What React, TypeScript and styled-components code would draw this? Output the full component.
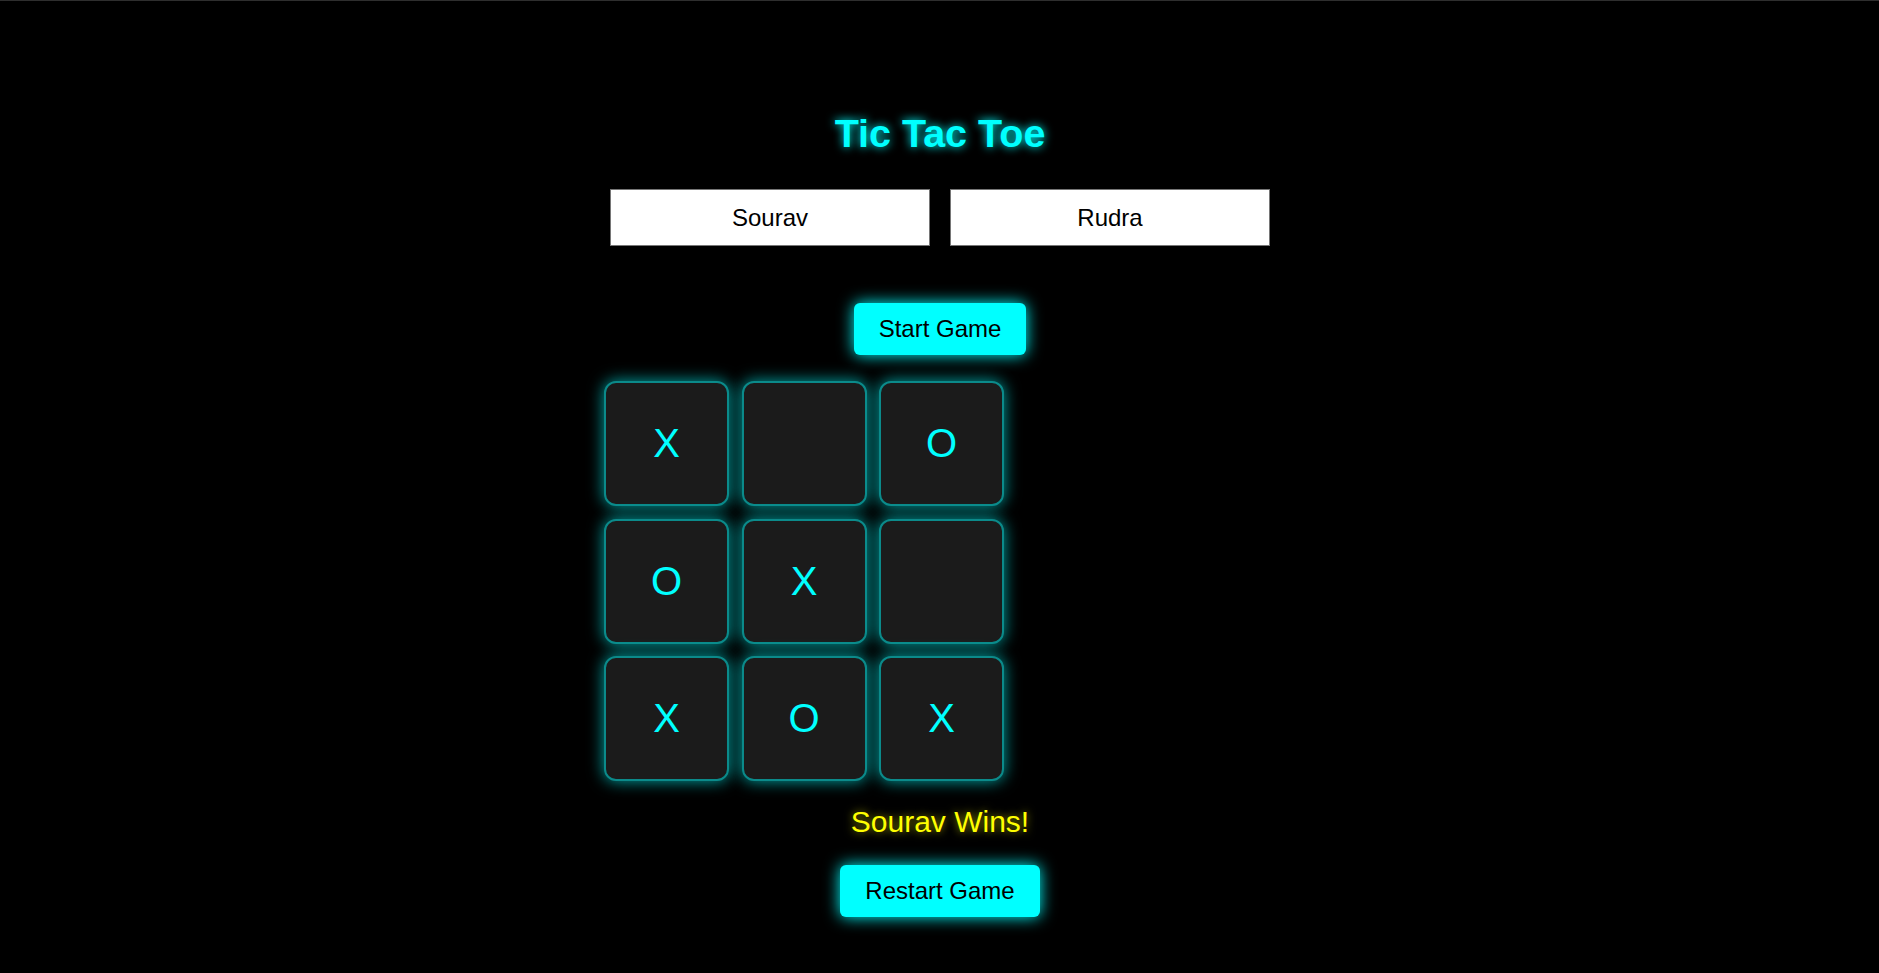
import React, { useState } from 'react'
import styled, { createGlobalStyle } from 'styled-components'

const GlobalStyle = createGlobalStyle`
  html, body {
    margin: 0;
    padding: 0;
    background: #000;
  }
  body {
    min-height: 973px;
    border-top: 1px solid #2e2e2e;
    box-sizing: border-box;
    font-family: 'Liberation Sans', Arial, sans-serif;
  }
`

const Page = styled.main`
  display: flex;
  flex-direction: column;
  align-items: center;
  padding-top: 110px;
  padding-bottom: 40px;
  padding-left: 1px;
`

const Title = styled.h1`
  margin: 0;
  font-size: 39.5px;
  line-height: 44px;
  font-weight: bold;
  color: #00ffff;
  text-shadow: 0 0 10px #00ffff;
`

const Players = styled.div`
  display: flex;
  gap: 20px;
  margin-top: 34px;
`

const NameInput = styled.input`
  box-sizing: border-box;
  width: 320px;
  height: 57px;
  border: 1px solid #767676;
  background: #fff;
  color: #000;
  font-family: 'Liberation Sans', Arial, sans-serif;
  font-size: 24px;
  text-align: center;
  outline: none;
`

const GlowButton = styled.button<{ $gap: number }>`
  margin-top: ${p => p.$gap}px;
  padding: 12px 25px;
  height: 52px;
  border: none;
  border-radius: 6px;
  background: #00ffff;
  color: #000;
  font-family: 'Liberation Sans', Arial, sans-serif;
  font-size: 24px;
  line-height: 28px;
  cursor: pointer;
  box-shadow: 0 0 16px #00ffff;
`

const BoardArea = styled.div`
  width: 672px;
  margin-top: 26px;
  display: flex;
  justify-content: flex-start;
`

const Board = styled.div`
  display: grid;
  grid-template-columns: repeat(3, 125px);
  grid-auto-rows: 125px;
  gap: 12.5px;
`

const Cell = styled.div`
  box-sizing: border-box;
  display: flex;
  align-items: center;
  justify-content: center;
  background: #1b1b1b;
  border: 2px solid #0b8a8a;
  border-radius: 12px;
  box-shadow: 0 0 16px rgba(0, 255, 255, 0.65);
  color: #00ffff;
  font-size: 40px;
  cursor: pointer;
`

const Status = styled.div`
  margin-top: 24px;
  font-size: 30px;
  line-height: 34px;
  color: #ffff00;
  text-shadow: 0 0 8px rgba(255, 255, 0, 0.6);
`

const initialBoard = ['X', '', 'O', 'O', 'X', '', 'X', 'O', 'X']

export default function App() {
  const [board] = useState(initialBoard)
  const [p1, setP1] = useState('Sourav')
  const [p2, setP2] = useState('Rudra')

  return (
    <>
      <GlobalStyle />
      <Page>
        <Title>Tic Tac Toe</Title>
        <Players>
          <NameInput value={p1} onChange={e => setP1(e.target.value)} />
          <NameInput value={p2} onChange={e => setP2(e.target.value)} />
        </Players>
        <GlowButton $gap={57}>Start Game</GlowButton>
        <BoardArea>
          <Board>
            {board.map((v, i) => (
              <Cell key={i}>{v}</Cell>
            ))}
          </Board>
        </BoardArea>
        <Status>{p1} Wins!</Status>
        <GlowButton $gap={26}>Restart Game</GlowButton>
      </Page>
    </>
  )
}
